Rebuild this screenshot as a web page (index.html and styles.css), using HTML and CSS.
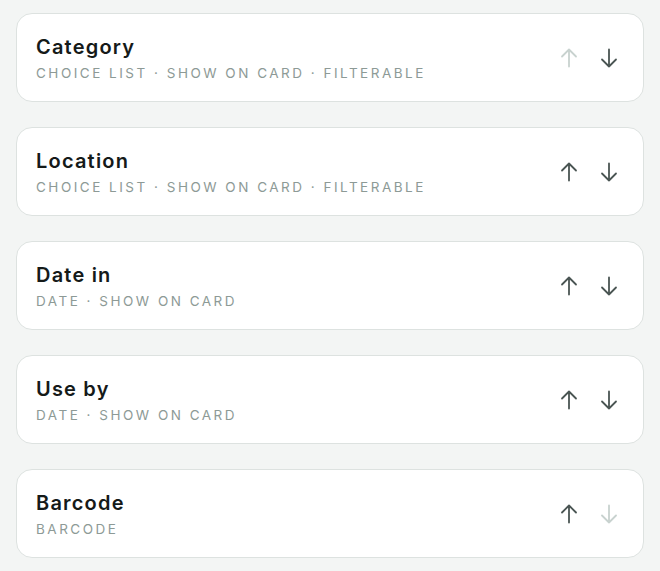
FILE: index.html
```html
<!DOCTYPE html>
<html>
<head>
<meta charset="utf-8">
<link rel="stylesheet" href="styles.css">
</head>
<body>
<div class="list">
  <div class="card">
    <div class="info">
      <div class="title">Category</div>
      <div class="meta">Choice list · Show on card · Filterable</div>
    </div>
    <div class="actions">
      <span class="btn disabled"><svg viewBox="0 0 24 24"><path d="M12 20.5V3.5M5 10.5l7-7 7 7"/></svg></span>
      <span class="btn"><svg viewBox="0 0 24 24"><path d="M12 3.5v17M5 13.5l7 7 7-7"/></svg></span>
    </div>
  </div>
  <div class="card">
    <div class="info">
      <div class="title">Location</div>
      <div class="meta">Choice list · Show on card · Filterable</div>
    </div>
    <div class="actions">
      <span class="btn"><svg viewBox="0 0 24 24"><path d="M12 20.5V3.5M5 10.5l7-7 7 7"/></svg></span>
      <span class="btn"><svg viewBox="0 0 24 24"><path d="M12 3.5v17M5 13.5l7 7 7-7"/></svg></span>
    </div>
  </div>
  <div class="card">
    <div class="info">
      <div class="title">Date in</div>
      <div class="meta">Date · Show on card</div>
    </div>
    <div class="actions">
      <span class="btn"><svg viewBox="0 0 24 24"><path d="M12 20.5V3.5M5 10.5l7-7 7 7"/></svg></span>
      <span class="btn"><svg viewBox="0 0 24 24"><path d="M12 3.5v17M5 13.5l7 7 7-7"/></svg></span>
    </div>
  </div>
  <div class="card">
    <div class="info">
      <div class="title">Use by</div>
      <div class="meta">Date · Show on card</div>
    </div>
    <div class="actions">
      <span class="btn"><svg viewBox="0 0 24 24"><path d="M12 20.5V3.5M5 10.5l7-7 7 7"/></svg></span>
      <span class="btn"><svg viewBox="0 0 24 24"><path d="M12 3.5v17M5 13.5l7 7 7-7"/></svg></span>
    </div>
  </div>
  <div class="card">
    <div class="info">
      <div class="title">Barcode</div>
      <div class="meta">Barcode</div>
    </div>
    <div class="actions">
      <span class="btn"><svg viewBox="0 0 24 24"><path d="M12 20.5V3.5M5 10.5l7-7 7 7"/></svg></span>
      <span class="btn disabled"><svg viewBox="0 0 24 24"><path d="M12 3.5v17M5 13.5l7 7 7-7"/></svg></span>
    </div>
  </div>
</div>
</body>
</html>
```
FILE: styles.css
```css
html, body {
  margin: 0;
  padding: 0;
  background: #f3f5f4;
  font-family: Inter, "Noto Sans", sans-serif;
}
.list {
  display: flex;
  flex-direction: column;
  gap: 25px;
  padding: 13px 16px 0 16px;
}
.card {
  display: flex;
  align-items: center;
  justify-content: space-between;
  background: #ffffff;
  border: 1px solid #dde2e0;
  border-radius: 16px;
  padding: 21px 18px 19px 19px;
}
.title {
  font-size: 20px;
  line-height: 24px;
  font-weight: 600;
  letter-spacing: 1.2px;
  color: #151a19;
}
.meta {
  margin-top: 5px;
  font-size: 13.5px;
  line-height: 18px;
  letter-spacing: 2.5px;
  text-transform: uppercase;
  color: #8d9a96;
}
.actions {
  display: flex;
  gap: 8px;
  margin-top: -2px;
}
.btn {
  width: 32px;
  height: 32px;
  display: flex;
  align-items: center;
  justify-content: center;
}
.btn svg {
  width: 24px;
  height: 24px;
  fill: none;
  stroke: #4a5553;
  stroke-width: 1.8;
  stroke-linecap: round;
  stroke-linejoin: round;
}
.btn.disabled svg {
  stroke: #c8d2cf;
}
```
